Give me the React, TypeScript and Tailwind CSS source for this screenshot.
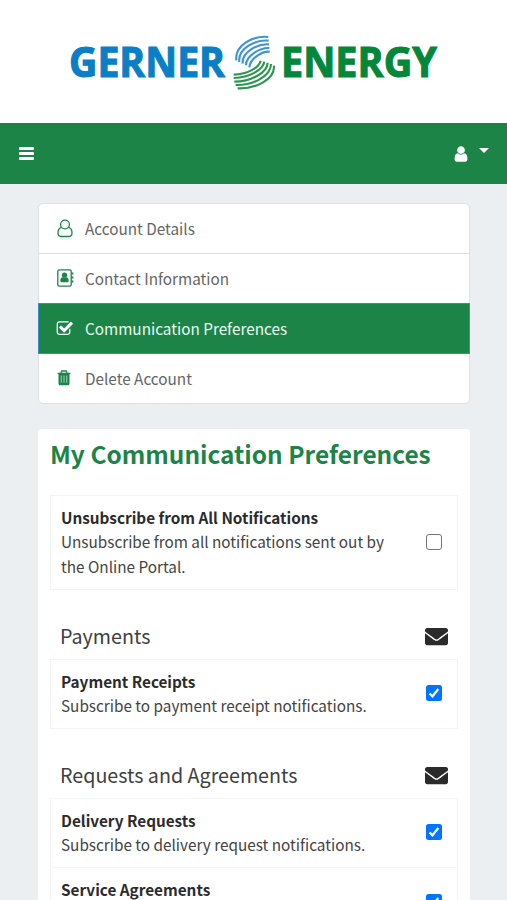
import React from "react";
import { FaEnvelope } from "react-icons/fa";

const USER =
  "M1536 1399q0 109-62.5 187t-150.5 78h-854q-88 0-150.5-78t-62.5-187q0-85 8.5-160.5t31.5-152 58.5-131 94-89 134.5-34.5q131 128 313 128t313-128q76 0 134.5 34.5t94 89 58.5 131 31.5 152 8.5 160.5zm-256-887q0 159-112.5 271.5t-271.5 112.5-271.5-112.5-112.5-271.5 112.5-271.5 271.5-112.5 271.5 112.5 112.5 271.5z";
const CHECK =
  "M1472 930v318q0 119-84.5 203.5t-203.5 84.5h-832q-119 0-203.5-84.5t-84.5-203.5v-832q0-119 84.5-203.5t203.5-84.5h832q63 0 117 25 15 7 18 23 3 17-9 29l-49 49q-10 10-23 10-3 0-9-2-23-6-45-6h-832q-66 0-113 47t-47 113v832q0 66 47 113t113 47h832q66 0 113-47t47-113v-254q0-13 9-22l64-64q10-10 23-10 6 0 12 3 20 8 20 29zm231-489l-814 814q-24 24-57 24t-57-24l-430-430q-24-24-24-57t24-57l110-110q24-24 57-24t57 24l263 263 647-647q24-24 57-24t57 24l110 110q24 24 24 57t-24 57z";

function Logo() {
  return (
    <svg width="507" height="123" viewBox="0 0 507 123" className="block font-['Open_Sans',sans-serif] font-bold">
      <text x="69" y="77" fontSize="41" fill="#0a7fc6" stroke="#0a7fc6" strokeWidth="1.1" textLength="156" lengthAdjust="spacingAndGlyphs">GERNER</text>
      <text x="281" y="77" fontSize="41" fill="#05873b" stroke="#05873b" strokeWidth="1.1" textLength="156" lengthAdjust="spacingAndGlyphs">ENERGY</text>
      <g transform="translate(225 25) scale(.3333)" fill="none" strokeWidth="6.4">
        <g stroke="#3d94d6">
          <path d="M130 36C85 31 28 60 34 106" />
          <path d="M131 47C92 43 38 70 43 111" />
          <path d="M132 58C100 55 50 80 53 116" />
          <path d="M133 69C106 67 62 92 63 121" />
          <path d="M134 80C112 78 76 100 73 127" />
        </g>
        <g stroke="#2c9650">
          <path d="M147 122C150 165 90 192 38 190" />
          <path d="M138 117C138 152 85 182 32 180" />
          <path d="M128 113C127 142 80 170 28 170" />
          <path d="M118 110C115 133 75 158 26 159" />
          <path d="M107 107C103 126 70 148 26 149" />
        </g>
      </g>
    </svg>
  );
}

function PersonOutline() {
  return (
    <svg width="16" height="19" viewBox="0 0 16 19" fill="none" stroke="currentColor" strokeWidth="1.3" className="relative -ml-[.5px] -mt-px">
      <circle cx="8" cy="5.5" r="4.4" />
      <path d="M4.6 8.3C2 8.7 1 11.2 1 14.1c0 2 1 3.4 2.8 3.4h8.4c1.8 0 2.8-1.4 2.8-3.4 0-2.9-1-5.4-3.6-5.8" />
    </svg>
  );
}

function AddressBook() {
  return (
    <svg width="17" height="18" viewBox="0 0 17 18" fill="currentColor" className="-mt-px -ml-[.5px]">
      <rect x=".8" y=".8" width="13.4" height="16.4" rx="1.4" fill="none" stroke="currentColor" strokeWidth="1.3" />
      <circle cx="7.5" cy="6.2" r="2.6" />
      <path d="M5.5 8.2c-1.7.2-2.2 1.8-2.2 3.4 0 1 .5 1.6 1.4 1.6h5.6c.9 0 1.4-.6 1.4-1.6 0-1.6-.5-3.2-2.2-3.4-1.2 1-2.8 1-4 0z" />
      <path d="M14.4 3.4h2v2.2h-2zM14.4 7.4h2v2.2h-2zM14.4 11.4h2v2.2h-2z" />
    </svg>
  );
}

function CheckSquare() {
  return <svg width="17.5" height="17.5" viewBox="0 0 1792 1792" fill="currentColor" className="-ml-[2px]"><path d={CHECK} /></svg>;
}

function Trash() {
  return (
    <svg width="14" height="16" viewBox="0 0 14 16" className="-mt-px">
      <path d="M4 2.8 4.7 1h4.6l.7 1.8M.6 3.3h12.8" fill="none" stroke="currentColor" strokeWidth="1.3" />
      <path d="M1.5 3.5h11v10c0 1.1-.7 1.8-1.6 1.8H3.1c-.9 0-1.6-.7-1.6-1.8z" fill="currentColor" />
      <path d="M4.3 5.5v7.3M7 5.5v7.3M9.7 5.5v7.3" stroke="#8fc5a5" strokeWidth="1.2" />
    </svg>
  );
}

const menu = [
  { label: "Account Details", icon: <PersonOutline />, row: "h-[49px] text-[#1d8448]" },
  { label: "Contact Information", icon: <AddressBook />, row: "h-[50px] border-t border-[#dcdfe1] text-[#1d8448]" },
  { label: "Communication Preferences", icon: <CheckSquare />, row: "-mx-px h-[51px] border border-[#3a8bc0] bg-[#1d8448] text-white", active: true },
  { label: "Delete Account", icon: <Trash />, row: "h-[49px] text-[#1d8448]" },
];

function Checkbox({ checked }: { checked?: boolean }) {
  return checked ? (
    <span className="flex size-4 shrink-0 items-center justify-center rounded-[2.5px] bg-[#0075ff]">
      <svg width="12" height="12" viewBox="0 0 12 12" fill="none" stroke="white" strokeWidth="2.2"><path d="M1.5 6.5 4.5 9.3 10.3 2" /></svg>
    </span>
  ) : (
    <span className="size-4 shrink-0 rounded-[3px] border border-[#767676] bg-white" />
  );
}

function Item({ title, text, checked, className = "" }: { title: string; text: React.ReactNode; checked?: boolean; className?: string }) {
  return (
    <div className={`flex items-center justify-between border border-[#f3f4f4] pr-[15px] pb-[2px] pl-2.5 ${className}`}>
      <div className="text-[15.3px] leading-[24.4px] whitespace-nowrap text-[#444]">
        <div className="font-bold text-[#2b2b2b]">{title}</div>
        <div>{text}</div>
      </div>
      <Checkbox checked={checked} />
    </div>
  );
}

function Section({ title }: { title: string }) {
  return (
    <div className="flex h-[46px] items-center justify-between pr-2.5 pl-[10px]">
      <h2 className="text-[19.7px] leading-6 text-[#404040]">{title}</h2>
      <FaEnvelope size={23} color="#2b2b2b" />
    </div>
  );
}

export default function App() {
  return (
    <div className="h-[900px] w-[507px] overflow-hidden bg-[#ebeff2] font-['Noto_Sans_CJK_SC',sans-serif]">
      <header className="h-[123px] bg-white"><Logo /></header>
      <nav className="flex h-[61px] items-center justify-between bg-[#1d8448] pr-[18px] pl-[19px] text-white">
        <div className="flex w-[15px] flex-col gap-[2px]">
          <span className="h-[3px] rounded-[1px] bg-white" />
          <span className="h-[3px] rounded-[1px] bg-white" />
          <span className="h-[3px] rounded-[1px] bg-white" />
        </div>
        <div className="flex items-center gap-[9px]">
          <svg width="18" height="18" viewBox="0 0 1792 1792" fill="currentColor"><path d={USER} /></svg>
          <svg width="10" height="5" viewBox="0 0 10 5" fill="currentColor" className="mb-[6px]"><path d="M0 0h10L5 5z" /></svg>
        </div>
      </nav>

      <ul className="mt-[19px] mr-[37px] ml-[38px] rounded-[5px] border border-[#dfe2e4] bg-white">
        {menu.map((m) => (
          <li key={m.label} className={`flex items-center ${m.active ? "pl-[19px]" : "pl-[18px]"} ${m.row}`}>
            <span className="flex w-7 items-center">{m.icon}</span>
            <span className={`-mt-px text-[15.3px] leading-6 ${m.active ? "-ml-px text-[#eaf8ef]" : "text-[#666]"}`}>{m.label}</span>
          </li>
        ))}
      </ul>

      <main className="mt-[25px] mr-[37px] ml-[38px] h-[480px] rounded-t-[4px] bg-white px-3">
        <h1 className="pt-[9px] text-[24.45px] leading-8 font-bold whitespace-nowrap text-[#1d8448]">My Communication Preferences</h1>
        <Item
          className="mt-[25px] h-[95px]"
          title="Unsubscribe from All Notifications"
          text={<>Unsubscribe from all notifications sent out by<br />the Online Portal.</>}
        />
        <div className="h-[23px]" />
        <Section title="Payments" />
        <Item className="h-[70px]" title="Payment Receipts" text="Subscribe to payment receipt notifications." checked />
        <div className="h-[23px]" />
        <Section title="Requests and Agreements" />
        <Item className="h-[70px]" title="Delivery Requests" text="Subscribe to delivery request notifications." checked />
        <Item className="-mt-px h-[71px]" title="Service Agreements" text={<>&nbsp;</>} checked />
      </main>
    </div>
  );
}
